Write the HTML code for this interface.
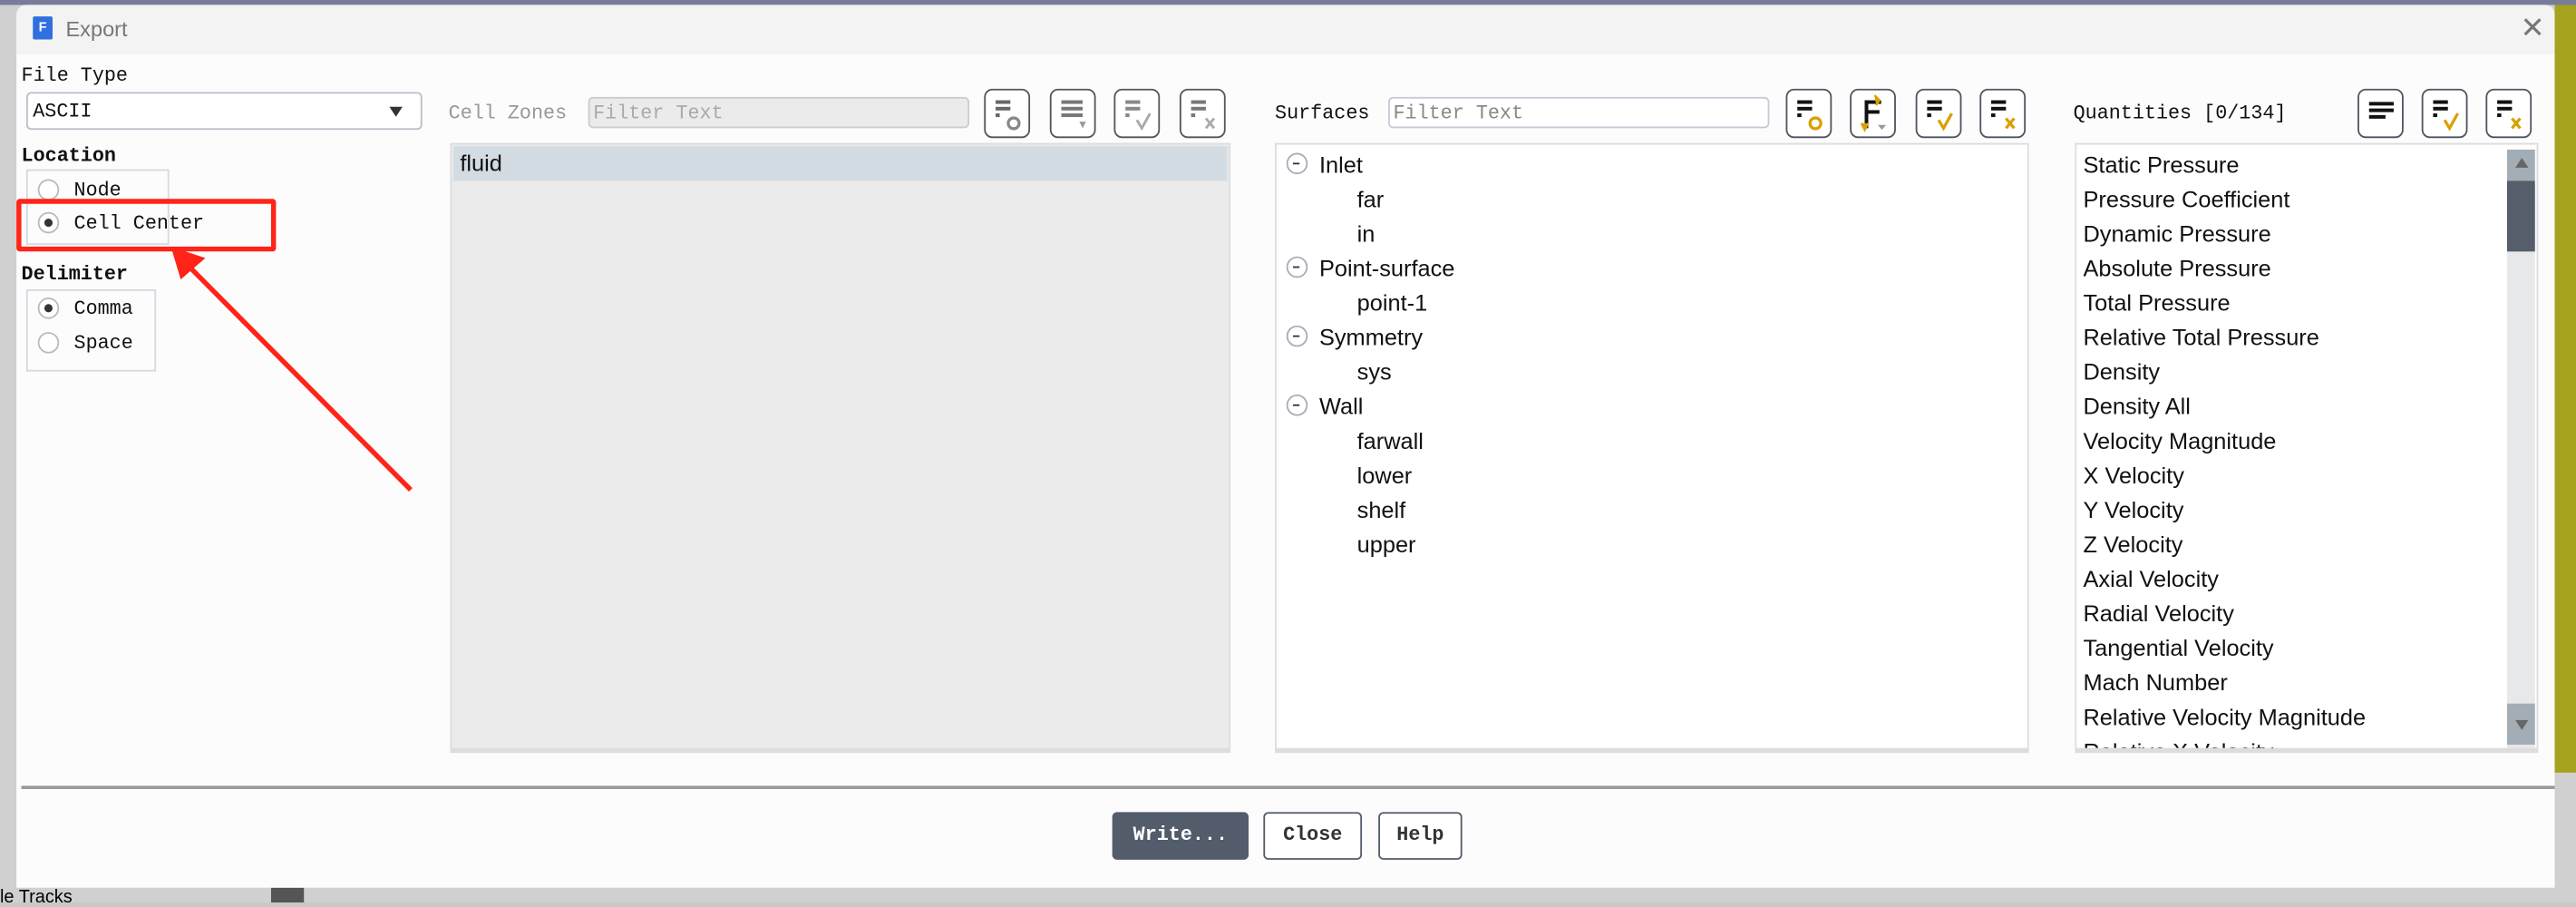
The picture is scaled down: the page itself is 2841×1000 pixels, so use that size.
<!DOCTYPE html>
<html><head><meta charset="utf-8"><style>
html,body{margin:0;padding:0;width:2841px;height:995px;overflow:hidden;background:#c8c8c8}
#w{position:absolute;left:0;top:0;width:1568px;height:549px;transform:scale(1.8119,1.8124);transform-origin:0 0;background:#d0d0d0;font-family:"Liberation Sans",sans-serif}
.a{position:absolute}
.mono{font-family:"Liberation Mono",monospace;font-size:12px;color:#111}
.lbl{font-weight:bold}
.btn{position:absolute;width:28px;height:30px;box-sizing:border-box;border:1.5px solid #4e5560;border-radius:5px;background:#fff}
.btn svg{position:absolute;left:0;top:0}
.it{position:absolute;font-size:14px;color:#111;white-space:nowrap;line-height:21px}
.rad{position:absolute;width:13px;height:13px;border:1px solid #bbb;border-radius:50%;background:#fff;box-sizing:border-box}
.rad.on::after{content:"";position:absolute;left:3px;top:3px;width:5px;height:5px;border-radius:50%;background:#333}
.tog{position:absolute;width:13px;height:13px;border:1.5px solid #aab;border-radius:50%;box-sizing:border-box}
.tog::after{content:"";position:absolute;left:3px;top:4.5px;width:4px;height:1.5px;background:#333}
.pb{position:absolute;height:29px;box-sizing:border-box;border:1.5px solid #525c6a;border-radius:3px;background:#fff;font-family:"Liberation Mono",monospace;font-weight:bold;font-size:12px;line-height:26px;text-align:center;color:#333}
</style></head><body><div id="w">
<!-- background bits -->
<div class="a" style="left:1555px;top:0;width:13px;height:470px;background:#a5a21e"></div>
<div class="a" style="left:0;top:0;width:1568px;height:3px;background:#7a7a9a"></div>
<div class="a" style="left:165px;top:540px;width:20px;height:9px;background:#555"></div>
<div class="a" style="left:0;top:540px;font-size:11px">le Tracks</div>
<!-- dialog -->
<div class="a" style="left:10px;top:3px;width:1545px;height:537px;background:#fcfcfc;border-radius:6px 6px 0 0;overflow:hidden">
 <div class="a" style="left:0;top:0;width:1545px;height:30px;background:#f3f3f3"></div>
 <div class="a" style="left:10px;top:7px;width:12px;height:14px;background:#2f6fe0;border-radius:1px;color:#fff;font-size:8px;font-weight:bold;text-align:center;line-height:14px">F</div>
 <div class="a" style="left:30px;top:7px;font-size:13px;color:#777">Export</div>
 <div class="a" style="left:1524px;top:4px;font-size:18px;color:#777;font-weight:300">✕</div>
</div>
<div class="a mono" style="left:13px;top:39px">File Type</div>
<div class="a" style="left:16px;top:56px;width:241px;height:23px;box-sizing:border-box;border:1px solid #b8bfca;border-radius:3px;background:#fff"></div>
<div class="a mono" style="left:20px;top:61px">ASCII</div>
<div class="a" style="left:237px;top:65px;width:0;height:0;border-left:4px solid transparent;border-right:4px solid transparent;border-top:6px solid #333"></div>
<div class="a mono lbl" style="left:13px;top:88px">Location</div>
<div class="a" style="left:16px;top:103px;width:87px;height:46px;border:1px solid #d5dae2;box-sizing:border-box"></div>
<div class="rad" style="left:23px;top:109px"></div><div class="a mono" style="left:45px;top:109px">Node</div>
<div class="rad on" style="left:23px;top:129px"></div><div class="a mono" style="left:45px;top:129px">Cell Center</div>
<div class="a mono lbl" style="left:13px;top:160px">Delimiter</div>
<div class="a" style="left:16px;top:176px;width:79px;height:50px;border:1px solid #d5dae2;box-sizing:border-box"></div>
<div class="rad on" style="left:23px;top:181px"></div><div class="a mono" style="left:45px;top:181px">Comma</div>
<div class="rad" style="left:23px;top:202px"></div><div class="a mono" style="left:45px;top:202px">Space</div>
<!-- red annotation -->
<div class="a" style="left:10px;top:121px;width:158px;height:32px;box-sizing:border-box;border:3px solid #ff2418;border-radius:2px"></div>
<svg class="a" style="left:0;top:0" width="300" height="320"><line x1="250" y1="298" x2="113" y2="160" stroke="#ff2418" stroke-width="3"/><polygon points="104,150 125,157 110,170" fill="#ff2418"/></svg>
<!-- cell zones -->
<div class="a mono" style="left:273px;top:62px;color:#999">Cell Zones</div>
<div class="a" style="left:358px;top:59px;width:232px;height:19px;box-sizing:border-box;border:1px solid #ccc;border-radius:3px;background:#ebebeb"></div>
<div class="a mono" style="left:361px;top:62px;color:#aaa">Filter Text</div>
<div class="a" style="left:274px;top:87px;width:475px;height:371px;background:#ebebeb;border:1px solid #ddd;box-sizing:border-box;border-bottom:3px solid #ddd"></div>
<div class="a" style="left:276px;top:89px;width:471px;height:21px;background:#d3dbe3"></div>
<div class="it" style="left:280px;top:89px">fluid</div>
<!-- surfaces -->
<div class="a mono" style="left:776px;top:62px">Surfaces</div>
<div class="a" style="left:845px;top:59px;width:232px;height:19px;box-sizing:border-box;border:1px solid #c5ccd6;border-radius:3px;background:#fff"></div>
<div class="a mono" style="left:848px;top:62px;color:#888">Filter Text</div>
<div class="a" style="left:776px;top:87px;width:459px;height:371px;background:#fff;border:1px solid #ddd;box-sizing:border-box;border-bottom:3px solid #ddd"></div>
<div class="tog" style="left:783px;top:93px"></div><div class="it" style="left:803px;top:90px">Inlet</div>
<div class="it" style="left:826px;top:111px">far</div>
<div class="it" style="left:826px;top:132px">in</div>
<div class="tog" style="left:783px;top:156px"></div><div class="it" style="left:803px;top:153px">Point-surface</div>
<div class="it" style="left:826px;top:174px">point-1</div>
<div class="tog" style="left:783px;top:198px"></div><div class="it" style="left:803px;top:195px">Symmetry</div>
<div class="it" style="left:826px;top:216px">sys</div>
<div class="tog" style="left:783px;top:240px"></div><div class="it" style="left:803px;top:237px">Wall</div>
<div class="it" style="left:826px;top:258px">farwall</div>
<div class="it" style="left:826px;top:279px">lower</div>
<div class="it" style="left:826px;top:300px">shelf</div>
<div class="it" style="left:826px;top:321px">upper</div>
<!-- quantities -->
<div class="a mono" style="left:1262px;top:62px">Quantities [0/134]</div>
<div class="a" style="left:1263px;top:87px;width:282px;height:371px;background:#fff;border:1px solid #ddd;box-sizing:border-box;border-bottom:3px solid #ddd;overflow:hidden">
 <div style="position:absolute;left:4px;top:2px;font-size:14px;line-height:21px;color:#111;white-space:nowrap">Static Pressure<br>Pressure Coefficient<br>Dynamic Pressure<br>Absolute Pressure<br>Total Pressure<br>Relative Total Pressure<br>Density<br>Density All<br>Velocity Magnitude<br>X Velocity<br>Y Velocity<br>Z Velocity<br>Axial Velocity<br>Radial Velocity<br>Tangential Velocity<br>Mach Number<br>Relative Velocity Magnitude<br>Relative X Velocity</div>
 <div style="position:absolute;left:262px;top:3px;width:17px;height:365px;background:#e6e8ea"></div>
 <div style="position:absolute;left:262px;top:3px;width:17px;height:19px;background:#a3adb5"></div>
 <div style="position:absolute;left:262px;top:22px;width:17px;height:43px;background:#555e6b"></div>
 <div style="position:absolute;left:262px;top:340px;width:17px;height:25px;background:#a3adb5"></div>
 <div style="position:absolute;left:267px;top:8px;border-left:4px solid transparent;border-right:4px solid transparent;border-bottom:6px solid #666"></div>
 <div style="position:absolute;left:267px;top:350px;border-left:4px solid transparent;border-right:4px solid transparent;border-top:6px solid #666"></div>
</div>
<!-- icon buttons -->
<svg width="0" height="0" style="position:absolute"><defs>
<g id="bars"><rect x="6" y="6" width="9" height="2.2"/><rect x="6" y="10" width="9" height="2.2"/><rect x="6" y="14" width="2.5" height="2.2"/></g>
</defs></svg>
<div class="btn" style="left:599px;top:54px;border-color:#555"><svg width="28" height="30"><use href="#bars" fill="#666"/><circle cx="17" cy="20" r="3.3" fill="none" stroke="#888" stroke-width="1.8"/></svg></div>
<div class="btn" style="left:639px;top:54px;border-color:#555"><svg width="28" height="30"><rect x="6" y="6" width="13" height="2.2" fill="#777"/><rect x="6" y="10" width="13" height="2.2" fill="#777"/><rect x="6" y="14" width="13" height="2.2" fill="#777"/><polygon points="17,19 21,19 19,23" fill="#999"/></svg></div>
<div class="btn" style="left:678px;top:54px;border-color:#555"><svg width="28" height="30"><use href="#bars" fill="#888"/><path d="M13 18 L16 23 L21 14" fill="none" stroke="#aaa" stroke-width="1.6"/></svg></div>
<div class="btn" style="left:718px;top:54px;border-color:#555"><svg width="28" height="30"><use href="#bars" fill="#777"/><path d="M15 17 L20 23 M20 17 L15 23" stroke="#aaa" stroke-width="1.6"/></svg></div>

<div class="btn" style="left:1087px;top:54px"><svg width="28" height="30"><use href="#bars" fill="#111"/><circle cx="17" cy="20" r="3.3" fill="none" stroke="#d9a000" stroke-width="1.8"/></svg></div>
<div class="btn" style="left:1126px;top:54px"><svg width="28" height="30"><rect x="8" y="6" width="2.2" height="17" fill="#111"/><rect x="8" y="6" width="10" height="2.2" fill="#111"/><rect x="8" y="12" width="9" height="2.2" fill="#111"/><path d="M14 3 L17 6 L15 9 M10 20 L8 24 L6 20" fill="#d9a000" stroke="#d9a000" stroke-width="1.3"/><polygon points="16,21 21,21 18.5,24" fill="#999"/></svg></div>
<div class="btn" style="left:1166px;top:54px"><svg width="28" height="30"><use href="#bars" fill="#111"/><path d="M13 18 L16 23 L21 14" fill="none" stroke="#d9a000" stroke-width="1.8"/></svg></div>
<div class="btn" style="left:1205px;top:54px"><svg width="28" height="30"><use href="#bars" fill="#111"/><path d="M15 17 L20 23 M20 17 L15 23" stroke="#d9a000" stroke-width="1.8"/></svg></div>

<div class="btn" style="left:1435px;top:54px"><svg width="28" height="30"><rect x="6" y="7" width="15" height="2.2" fill="#111"/><rect x="6" y="11" width="15" height="2.2" fill="#111"/><rect x="6" y="15" width="10" height="2.2" fill="#111"/></svg></div>
<div class="btn" style="left:1474px;top:54px"><svg width="28" height="30"><use href="#bars" fill="#111"/><path d="M13 18 L16 23 L21 14" fill="none" stroke="#d9a000" stroke-width="1.8"/></svg></div>
<div class="btn" style="left:1513px;top:54px"><svg width="28" height="30"><use href="#bars" fill="#111"/><path d="M15 17 L20 23 M20 17 L15 23" stroke="#d9a000" stroke-width="1.8"/></svg></div>
<!-- footer -->
<div class="a" style="left:13px;top:478px;width:1542px;height:2px;background:#9a9a9a"></div>
<div class="pb" style="left:677px;top:494px;width:83px;background:#525c6a;color:#fff">Write...</div>
<div class="pb" style="left:769px;top:494px;width:60px">Close</div>
<div class="pb" style="left:839px;top:494px;width:51px">Help</div>
</div></body></html>
